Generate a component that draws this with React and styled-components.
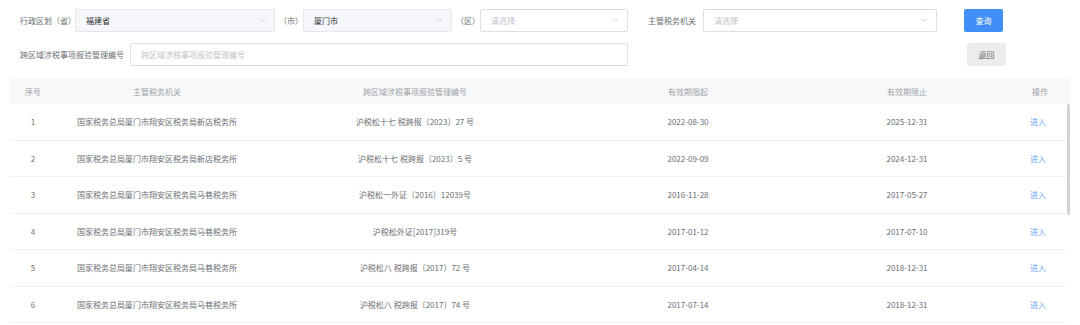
import React from 'react'
import styled, { createGlobalStyle } from 'styled-components'

const GlobalStyle = createGlobalStyle`
    body {
        margin: 0;
        background: #ffffff;
        font-family: "Noto Sans CJK SC", "Liberation Sans", sans-serif;
        font-size: 8px;
        color: #6b6e73;
    }
`;

const Pagina = styled.div`
    width: 1080px;
    height: 325px;
    overflow: hidden;
    padding-top: 9px;
    box-sizing: border-box;
`;

const Filtros = styled.div`
    display: flex;
    flex-direction: column;
    gap: 11px;
    padding-left: 20px;
`;

const Fila = styled.div`
    display: flex;
    align-items: center;
    height: 23px;
`;

const Etiqueta = styled.label`
    width: ${p => p.w}px;
    flex-shrink: 0;
    box-sizing: border-box;
    padding-right: ${p => p.pr || 0}px;
    text-align: ${p => p.align || 'left'};
    white-space: nowrap;
    color: #6b6e73;
    font-size: 8px;
    line-height: 23px;
`;

const Selector = styled.div`
    width: ${p => p.w}px;
    height: 23px;
    box-sizing: border-box;
    flex-shrink: 0;
    display: flex;
    align-items: center;
    justify-content: space-between;
    padding: 0 8px 0 10px;
    border: 1px solid ${p => p.disabled ? '#e4e7ed' : '#dcdfe6'};
    background: ${p => p.disabled ? '#f5f7fa' : '#ffffff'};
    border-radius: 2px;
    color: ${p => p.placeholder ? '#c0c4cc' : '#303133'};
    font-size: 8px;
`;

const Entrada = styled.div`
    width: ${p => p.w}px;
    height: 23px;
    box-sizing: border-box;
    flex-shrink: 0;
    display: flex;
    align-items: center;
    padding-left: 10px;
    border: 1px solid #dcdfe6;
    border-radius: 2px;
    color: #c0c4cc;
    font-size: 8px;
`;

const Boton = styled.button`
    margin-left: ${p => p.ml}px;
    width: 39px;
    height: 23px;
    border: none;
    border-radius: 2px;
    padding: 0;
    font-family: inherit;
    font-size: 8px;
    background: ${p => p.primary ? '#428ef7' : '#ececec'};
    color: ${p => p.primary ? '#ffffff' : '#666666'};
`;

const Tabla = styled.div`
    margin: 12px 10px 0 10px;
    width: 1060px;
`;

const columnas = '46px 202px 314px 232px 206px 1fr';

const Cabecera = styled.div`
    display: grid;
    grid-template-columns: ${columnas};
    height: 26px;
    align-items: center;
    background: #f7f8fa;
    color: #a0a3a8;
`;

const Cuerpo = styled.div`
    display: flex;
`;

const Filas = styled.div`
    flex: 1;
`;

const FilaTabla = styled.div`
    display: grid;
    grid-template-columns: ${columnas};
    height: 36.5px;
    box-sizing: border-box;
    align-items: center;
    border-bottom: 1px solid #f0f1f4;
`;

const Celda = styled.div`
    text-align: center;
    white-space: nowrap;
    color: ${p => p.link ? '#6aa5f8' : 'inherit'};
`;

const Barra = styled.div`
    width: 4px;
    flex-shrink: 0;
`;

const Pulgar = styled.div`
    height: 111px;
    width: 3px;
    margin-left: 1px;
    border-radius: 2px;
    background: #d3d3d3;
`;

const Flecha = () => (
    <svg width="7" height="5" viewBox="0 0 7 5">
        <polyline points="1,1 3.5,3.5 6,1" fill="none" stroke="#c0c4cc" strokeWidth="0.8" />
    </svg>
);

const datos = [
    ['1', '国家税务总局厦门市翔安区税务局新店税务所', '沪税松十七 税跨报〔2023〕27 号', '2022-08-30', '2025-12-31'],
    ['2', '国家税务总局厦门市翔安区税务局新店税务所', '沪税松十七 税跨报〔2023〕5 号', '2022-09-09', '2024-12-31'],
    ['3', '国家税务总局厦门市翔安区税务局马巷税务所', '沪税松一外证（2016）12039号', '2016-11-28', '2017-05-27'],
    ['4', '国家税务总局厦门市翔安区税务局马巷税务所', '沪税松外证[2017]319号', '2017-01-12', '2017-07-10'],
    ['5', '国家税务总局厦门市翔安区税务局马巷税务所', '沪税松八 税跨报〔2017〕72 号', '2017-04-14', '2018-12-31'],
    ['6', '国家税务总局厦门市翔安区税务局马巷税务所', '沪税松八 税跨报〔2017〕74 号', '2017-07-14', '2018-12-31'],
];

const App = () => {
    return (
        <Pagina>
            <GlobalStyle />
            <Filtros>
                <Fila>
                    <Etiqueta w={55}>行政区划（省）</Etiqueta>
                    <Selector w={200} disabled>福建省<Flecha /></Selector>
                    <Etiqueta w={28} align="right">（市）</Etiqueta>
                    <Selector w={149} disabled>厦门市<Flecha /></Selector>
                    <Etiqueta w={28} align="right">（区）</Etiqueta>
                    <Selector w={148} placeholder="1">请选择<Flecha /></Selector>
                    <Etiqueta w={75} pr={7} align="right">主管税务机关</Etiqueta>
                    <Selector w={234} placeholder="1">请选择<Flecha /></Selector>
                    <Boton primary ml={27}>查询</Boton>
                </Fila>
                <Fila>
                    <Etiqueta w={110}>跨区域涉税事项报验管理编号</Etiqueta>
                    <Entrada w={498}>跨区域涉税事项报验管理编号</Entrada>
                    <Boton ml={339}>返回</Boton>
                </Fila>
            </Filtros>
            <Tabla>
                <Cabecera>
                    <Celda>序号</Celda>
                    <Celda>主管税务机关</Celda>
                    <Celda>跨区域涉税事项报验管理编号</Celda>
                    <Celda>有效期限起</Celda>
                    <Celda>有效期限止</Celda>
                    <Celda>操作</Celda>
                </Cabecera>
                <Cuerpo>
                    <Filas>
                        {datos.map(d => (
                            <FilaTabla key={d[0]}>
                                {d.map((v, i) => <Celda key={i}>{v}</Celda>)}
                                <Celda link>进入</Celda>
                            </FilaTabla>
                        ))}
                    </Filas>
                    <Barra><Pulgar /></Barra>
                </Cuerpo>
            </Tabla>
        </Pagina>
    )
}

export default App
